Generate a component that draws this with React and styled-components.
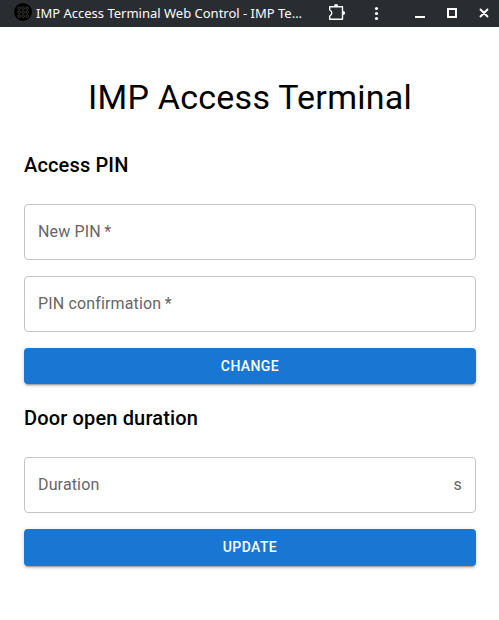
import React from 'react';
import styled, { createGlobalStyle } from 'styled-components';

const GlobalStyle = createGlobalStyle`
  * { box-sizing: border-box; }
  body { margin: 0; background: #fff; font-family: Roboto, "Liberation Sans", sans-serif; }
`;
const Window = styled.div`
  width: 499px;
  height: 620px;
  overflow: hidden;
  background: #fff;
`;
const TitleBar = styled.header`
  display: flex;
  align-items: center;
  height: 27px;
  padding-left: 14px;
  background: #292d32;
  color: #fcfcfc;
`;
const AppIcon = styled.svg`
  flex: none;
  width: 18px;
  height: 18px;
  margin-top: -3px;
`;
const Title = styled.div`
  flex: none;
  width: 268px;
  margin: -2px 0 0 4px;
  font: 13px/20px "Noto Sans", sans-serif;
  white-space: nowrap;
`;
const Controls = styled.svg`
  flex: none;
  width: 175px;
  height: 27px;
  margin-left: 20px;
`;
const Page = styled.main`
  padding: 45px 23px 0 24px;
`;
const Heading = styled.h1`
  margin: 0;
  height: 50px;
  font-size: 34px;
  font-weight: 400;
  line-height: 50px;
  letter-spacing: 0.25px;
  text-align: center;
  color: #000;
`;
const Section = styled.section`
  margin-top: ${(p) => p.$gap}px;
`;
const SectionTitle = styled.h2`
  margin: 0 0 23px;
  font-size: 20px;
  font-weight: 500;
  line-height: 32px;
  letter-spacing: 0.15px;
  color: #000;
`;
const Field = styled.label`
  display: flex;
  align-items: center;
  justify-content: space-between;
  height: 56px;
  margin-bottom: 16px;
  padding: 0 13px 2px;
  border: 1px solid #c4c4c4;
  border-radius: 4px;
  font-size: 16px;
  letter-spacing: 0.15px;
  color: #666;
`;
const Button = styled.button`
  display: block;
  width: 100%;
  height: ${(p) => p.$height || 36}px;
  padding: 0 0 ${(p) => (p.$height ? 1 : 0)}px;
  border: 0;
  border-radius: 4px;
  background: #1976d2;
  color: #fff;
  font: 500 14px/24px Roboto, sans-serif;
  letter-spacing: 0.4px;
  text-transform: uppercase;
  box-shadow: 0 3px 1px -2px rgba(0,0,0,.2), 0 2px 2px 0 rgba(0,0,0,.14), 0 1px 5px 0 rgba(0,0,0,.12);
`;

export default function App() {
  return (
    <Window>
      <GlobalStyle />
      <TitleBar>
        <AppIcon viewBox="0 0 18 18">
          <circle cx="9" cy="9" r="9" fill="#000" />
          <g fill="none" stroke="#484848" strokeWidth="0.8">
            {[5.2, 9.2, 13.2].map((y) => [5.2, 9.2, 13.2].map((x) => (
              <rect key={`${x}-${y}`} x={x - 1.2} y={y - 1.2} width="2.4" height="2.4" rx="0.8" />
            )))}
          </g>
        </AppIcon>
        <Title>IMP Access Terminal Web Control - IMP Te…</Title>
        <Controls viewBox="324 0 175 27">
          <path fill="none" stroke="#fcfcfc" strokeWidth="1.4" strokeLinejoin="round" d="M329.700 6.700h12.800v12.600h-12.800v-3.300c2.800-1.600 2.800-4.400 0-6z" />
          <path fill="#fcfcfc" d="M334 6.200a2.100 2.100 0 0 1 4.200 0zM343 10.900a2.100 2.100 0 0 1 0 4.200z" />
          <g fill="#fcfcfc"><circle cx="376.500" cy="8.500" r="1.600" /><circle cx="376.500" cy="13.500" r="1.600" /><circle cx="376.500" cy="18.500" r="1.600" /></g>
          <path fill="none" stroke="#fcfcfc" strokeWidth="2" d="M415 17h10M448 9h8v8h-8zM480 9l8 8M488 9l-8 8" />
        </Controls>
      </TitleBar>
      <Page>
        <Heading>IMP Access Terminal</Heading>
        <Section $gap={27}>
          <SectionTitle>Access PIN</SectionTitle>
          <Field>New PIN{'\u2009'}*</Field>
          <Field>PIN confirmation{'\u2009'}*</Field>
          <Button>Change</Button>
        </Section>
        <Section $gap={18}>
          <SectionTitle>Door open duration</SectionTitle>
          <Field><span>Duration</span><span>s</span></Field>
          <Button $height={37}>Update</Button>
        </Section>
      </Page>
    </Window>
  );
}
